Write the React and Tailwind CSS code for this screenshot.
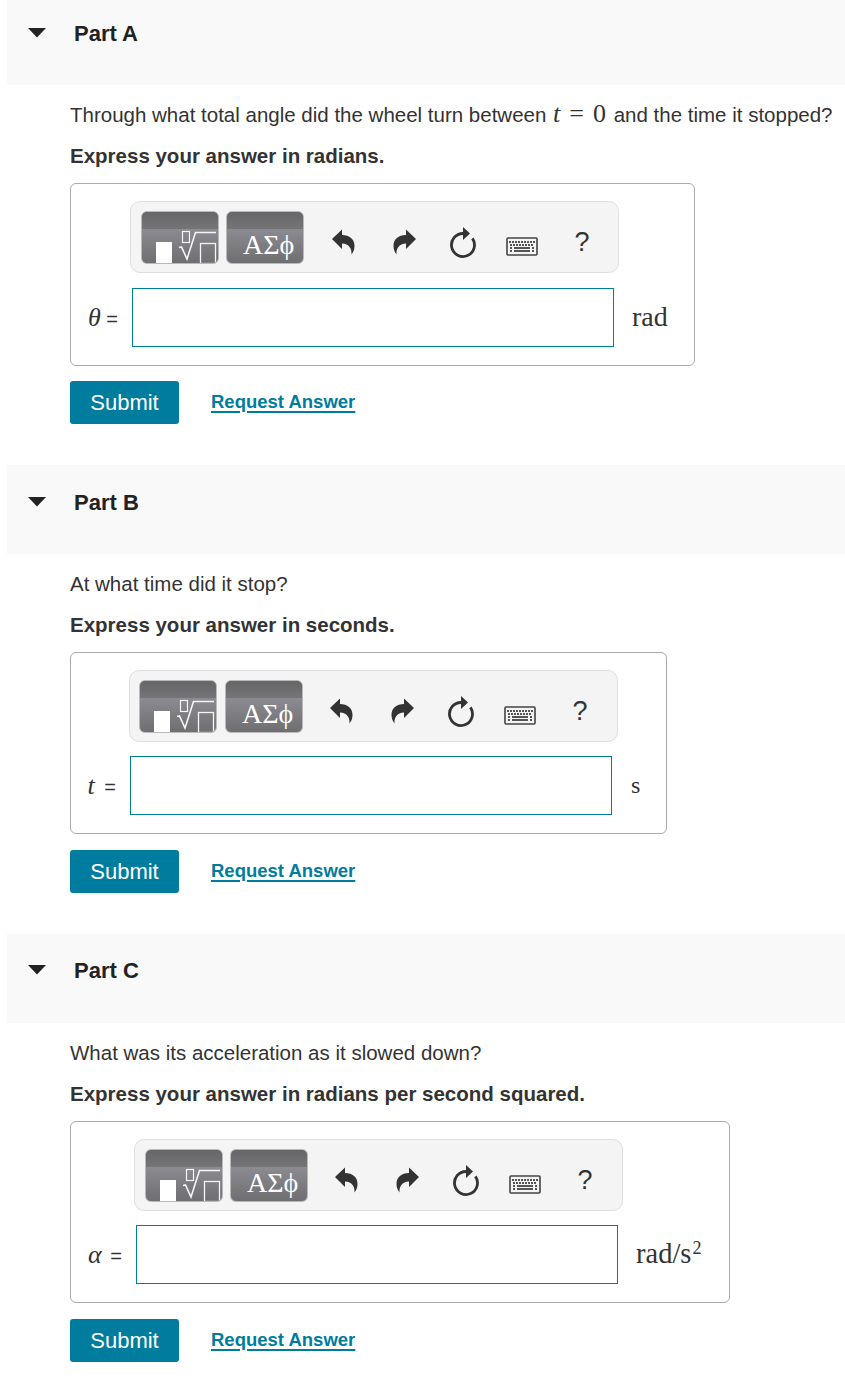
import React from 'react';

const PARTS = [
  {
    name: 'Part A',
    head: 'h-[85px] pt-[18px]',
    question: (
      <>
        Through what total angle did the wheel turn between{' '}
        <span className="ml-[1px] mr-[2px] font-['Liberation_Serif',serif] text-[26px] leading-[16px]">
          <i>t</i>
          <span className="mx-[9px]">=</span>0
        </span>{' '}
        and the time it stopped?
      </>
    ),
    hint: 'Express your answer in radians.',
    box: 'w-[625px] h-[183px]',
    bar: 'ml-[59px]',
    label: 'w-[61px]',
    symbol: 'θ',
    symbolGap: '',
    unit: 'rad',
    unitSize: 'text-[28px]',
    unitGap: 'ml-[18px]',
    cells: 'pl-[10px] gap-x-[7px]',
    icons: 'ml-[9px]',
    rowGap: 'mt-[15px]',
    submitGap: 'mt-[15px]',
  },
  {
    name: 'Part B',
    head: 'h-[89px] pt-[22px]',
    question: 'At what time did it stop?',
    hint: 'Express your answer in seconds.',
    box: 'w-[597px] h-[182px]',
    bar: 'ml-[58px]',
    label: 'w-[59px]',
    symbol: 't',
    symbolGap: 'mr-[4px]',
    unit: 's',
    unitSize: 'text-[24px]',
    unitGap: 'ml-[19px]',
    cells: 'pl-[9px] gap-x-[8px]',
    icons: 'ml-[8px]',
    rowGap: 'mt-[14px]',
    submitGap: 'mt-[16px]',
  },
  {
    name: 'Part C',
    head: 'h-[89px] pt-[21px]',
    question: 'What was its acceleration as it slowed down?',
    hint: 'Express your answer in radians per second squared.',
    box: 'w-[660px] h-[182px]',
    bar: 'ml-[63px]',
    label: 'w-[65px]',
    symbol: 'α',
    symbolGap: 'mr-[3px]',
    unit: (
      <>
        rad/s<sup className="top-0 ml-[1px] text-[18px] leading-none align-[9px]">2</sup>
      </>
    ),
    unitSize: 'text-[28.5px]',
    unitGap: 'ml-[18px]',
    cells: 'pl-[10px] gap-x-[7px]',
    icons: 'ml-[8px]',
    rowGap: 'mt-[14px]',
    submitGap: 'mt-[16px]',
  },
];

function GrayButton({ children }) {
  return (
    <div className="relative w-[78px] h-[53px] shrink-0 rounded-[6px] border border-[#b9b9b9] overflow-hidden bg-gradient-to-b from-[#9a99a1] to-[#6f6f72]">
      <div className="h-[17px] bg-gradient-to-b from-[#666668] to-[#757577]" />
      {children}
    </div>
  );
}

function ArrowIcon({ flip }) {
  return (
    <svg width="23" height="26" viewBox="0 0 23 26" className={flip ? '-scale-x-100' : ''}>
      <path d="M0 10 L10 0.5 V6 C17.5 6 22.5 10 22.5 17 C22.5 20 21.5 23 19.5 25.5 C20 20 17 14.5 10 14.5 V20 Z" fill="#333" />
    </svg>
  );
}

function ResetIcon() {
  return (
    <svg width="26" height="31" viewBox="0 0 26 31">
      <path d="M13 6.5 A11.5 11.5 0 1 0 22.4 11.4" fill="none" stroke="#333" strokeWidth="2.8" />
      <path d="M13 0 L20 6.5 L13 13 Z" fill="#333" />
    </svg>
  );
}

function KeyboardIcon() {
  const rows = [
    [3, 6, 9, 12, 15, 18, 21, 24, 27],
    [4, 7, 10, 13, 16, 19, 22, 25],
  ];
  return (
    <svg width="32" height="19" viewBox="0 0 32 19">
      <rect x="1" y="1" width="30" height="17" rx="1" fill="#f4f4f4" stroke="#444" strokeWidth="1.6" />
      {rows.map((row, r) =>
        row.map((x) => <rect key={r + '-' + x} x={x} y={4 + r * 3} width="2" height="2" fill="#555" />)
      )}
      <rect x="4" y="10" width="2" height="2" fill="#555" />
      <rect x="8" y="10" width="16" height="2" fill="#555" />
      <rect x="26" y="10" width="2" height="2" fill="#555" />
      <rect x="4" y="13" width="2" height="2" fill="#555" />
      <rect x="8" y="13" width="16" height="2" fill="#555" />
      <rect x="26" y="13" width="2" height="2" fill="#555" />
    </svg>
  );
}

function Toolbar({ part }) {
  return (
    <div className={`${part.bar} flex w-[489px] h-[72px] pt-[9px] rounded-[10px] border border-[#dfdfdf] bg-[#f4f4f4]`}>
      <div className={`flex ${part.cells}`}>
        <GrayButton>
          <svg width="78" height="53" viewBox="0 0 78 53" className="absolute left-0 top-0">
            <rect x="14" y="30" width="16" height="21" fill="#fff" />
            <rect x="40.5" y="19.5" width="7" height="11" fill="none" stroke="#f5f5f5" strokeWidth="1.2" />
            <path d="M37 35.5 L39.5 35 L45 47 L53.5 20.5 H74" fill="none" stroke="#f5f5f5" strokeWidth="1.6" />
            <rect x="58.5" y="31.5" width="15" height="20" fill="none" stroke="#f5f5f5" strokeWidth="1.3" />
          </svg>
        </GrayButton>
        <GrayButton>
          <div className="absolute left-[16px] bottom-[2px] font-['Liberation_Serif',serif] text-[28px] leading-[32px] text-white whitespace-nowrap">
            ΑΣϕ
          </div>
        </GrayButton>
      </div>
      <div className={`flex ${part.icons}`}>
        <div className="w-[60px] flex justify-center pt-[18px]"><ArrowIcon /></div>
        <div className="w-[62px] flex justify-center pt-[18px]"><ArrowIcon flip /></div>
        <div className="w-[55px] flex justify-center pt-[16px]"><ResetIcon /></div>
        <div className="w-[64px] flex justify-center pt-[26px]"><KeyboardIcon /></div>
        <div className="w-[56px] flex justify-center pt-[15px] font-['Liberation_Sans',sans-serif] text-[27px] leading-[32px] text-[#333]">?</div>
      </div>
    </div>
  );
}

function Part({ part }) {
  return (
    <section className="pb-[41px] last:pb-[18px]">
      <div className={`${part.head} ml-[7px] pl-[21px] flex items-start gap-x-[28px] bg-[#f9f9f9]`}>
        <svg width="18" height="10" viewBox="0 0 18 10" className="mt-[10px] shrink-0">
          <path d="M0 0 H18 L9 9.5 Z" fill="#222" />
        </svg>
        <h2 className="text-[22px] leading-[32px] font-bold text-[#222]">{part.name}</h2>
      </div>
      <div className="pl-[70px]">
        <p className="mt-[18px] h-[24px] text-[20.5px] leading-[24px] text-[#333] whitespace-nowrap">{part.question}</p>
        <p className="mt-[17px] h-[24px] text-[20.5px] leading-[24px] font-bold text-[#333]">{part.hint}</p>
        <div className={`${part.box} mt-[15px] pt-[17px] rounded-[6px] border border-[#aaa]`}>
          <Toolbar part={part} />
          <div className={`flex items-center ${part.rowGap}`}>
            <div className={`${part.label} shrink-0 pr-[14px] text-right text-[20px] leading-[24px] text-[#333] whitespace-nowrap`}>
              <i className={`${part.symbolGap} font-['Liberation_Serif',serif] text-[26px] leading-none`}>{part.symbol}</i> =
            </div>
            <input type="text" className="w-[482px] h-[59px] shrink-0 border border-[#007c9e] bg-white outline-none" />
            <div className={`${part.unitGap} ${part.unitSize} -mt-[2px] font-['Liberation_Serif',serif] leading-[28px] text-[#333] whitespace-nowrap`}>
              {part.unit}
            </div>
          </div>
        </div>
        <div className={`flex items-center ${part.submitGap}`}>
          <button className="w-[109px] h-[43px] rounded-[3px] bg-[#007c9e] text-[22px] text-white">Submit</button>
          <a href="#" className="ml-[32px] mb-[2px] text-[18.5px] font-bold text-[#007c9e] underline underline-offset-[3px] decoration-2">
            Request Answer
          </a>
        </div>
      </div>
    </section>
  );
}

export default function App() {
  return (
    <div className="w-[845px] bg-white font-['Liberation_Sans',Arial,sans-serif]">
      {PARTS.map((part) => (
        <Part key={part.name} part={part} />
      ))}
    </div>
  );
}
